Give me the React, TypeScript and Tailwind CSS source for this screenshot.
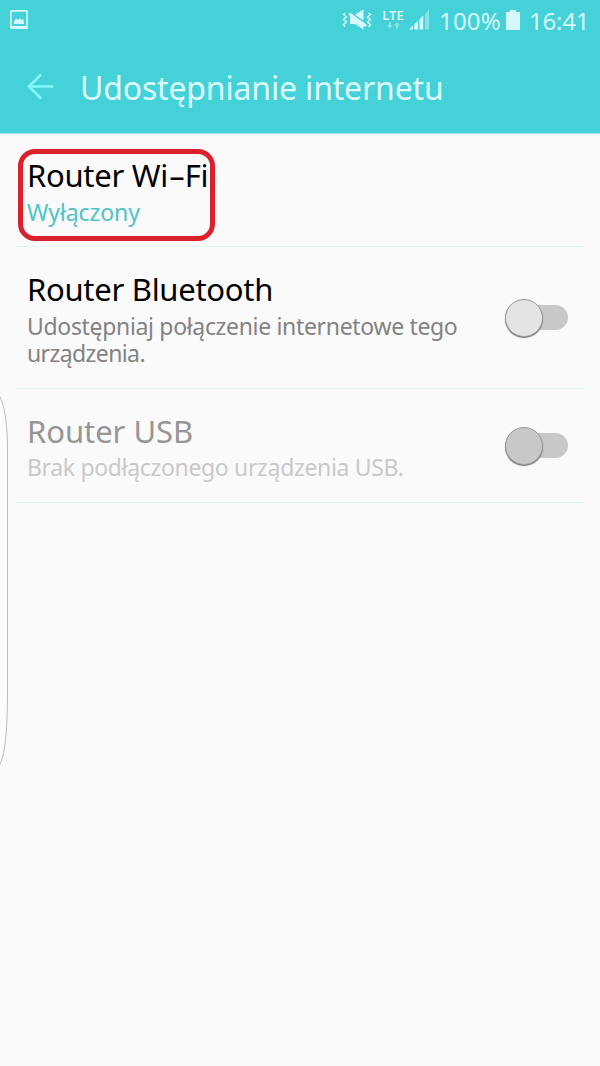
import React from "react";

function StatusBar() {
  return (
    <div className="flex h-10 items-center justify-between pr-[11px] pl-[10px] text-[#d5f8fa]">
      <svg width="18" height="20" viewBox="0 0 18 20" fill="currentColor">
        <path fillRule="evenodd" d="M1.500 0h15A1.500 1.500 0 0 1 18 1.500v16a1.500 1.500 0 0 1-1.500 1.500h-15A1.500 1.500 0 0 1 0 17.500v-16A1.500 1.500 0 0 1 1.500 0zM1.700 1.700v14.300h14.600V1.700z" />
        <path d="M4 14v-3l2.500-2.500 1.500 1.500 2-2 1.500 2 1-1 1.500 2v3z" />
      </svg>
      <div className="flex h-10 items-center">
        <svg width="30" height="24" viewBox="0 0 30 24" fill="currentColor">
          <path d="M21.500 1.500v11L13 6.500z" />
          <path d="M8 4.500L25 17l-1.500 2-2-1v3.500L13 16H8V8L6.500 7z" />
          <path d="M3 5L1.500 6.500 4.500 9l-3 2.500 3 2.500-3 2.500L3 19" fill="none" stroke="currentColor" strokeWidth="1.400" />
          <path d="M26.500 5l2 1.500-3 2.500 3 2.500-3 2.500 3 2.500-2 2.500" fill="none" stroke="currentColor" strokeWidth="1.400" />
        </svg>
        <div className="-mt-[4px] ml-[10px] flex w-[22px] flex-col items-center">
          <span className="text-[13px] leading-[14px] font-semibold">LTE</span>
          <svg width="13" height="7" viewBox="0 0 13 7" fill="currentColor" opacity="0.500">
            <path d="M2 0h2v3h2L3 6.500 0 3h2zM9 6.500h2v-3h2L10 0 7 3.500h2z" />
          </svg>
        </div>
        <svg className="-mt-[2px] ml-[5px]" width="21" height="22" viewBox="0 0 21 22" fill="currentColor">
          <path d="M0 21.500l4-4v4zM5.300 16.500l3.700-3.500v8.500H5.300zM10.500 11.500l3.700-4v14h-3.700z" />
          <path d="M16 6l4-4.500v20h-4z" opacity="0.450" />
        </svg>
        <span className="mt-px ml-[9px] w-[65px] text-[24px] leading-none tracking-[0.200px]">100%</span>
        <svg className="ml-[2px]" width="14" height="20" viewBox="0 0 14 20" fill="currentColor">
          <path d="M4 0h6v2h4v18H0V2h4z" />
        </svg>
        <span className="mt-px ml-[9px] w-[60px] text-[24px] leading-none tracking-[-0.200px]">16:41</span>
      </div>
    </div>
  );
}

function Toggle({ disabled = false }: { disabled?: boolean }) {
  return (
    <div className="flex h-10 w-[64px] shrink-0 items-center">
      <div className={`z-10 h-[38px] w-[38px] shrink-0 rounded-full border border-[#999] shadow-[0_1px_1px_#777] ${disabled ? "bg-[#c8c8c8]" : "bg-[#e4e4e4]"}`} />
      <div className="-mt-px -ml-[12px] h-[25px] w-[37px] rounded-r-full bg-[#c8c8c8]" />
    </div>
  );
}

export default function App() {
  return (
    <div className="relative flex h-[1066px] w-[600px] flex-col overflow-hidden bg-[#fafafa] font-['Noto_Sans',sans-serif]">
      <header className="h-[134px] border-b border-[#a5e3e7] bg-[#45d1d8]">
        <StatusBar />
        <div className="flex h-[93px] items-center pl-[27px]">
          <svg width="27" height="27" viewBox="0 0 27 27" fill="none" stroke="#80f9fc" strokeWidth="2.600">
            <path d="M26.500 13.500H2M14 1.500l-12 12 12 12" />
          </svg>
          <h1 className="mt-[2px] ml-[26px] text-[32px] leading-[44px] tracking-[-0.170px] whitespace-nowrap text-[#dcfdff]">Udostępnianie internetu</h1>
        </div>
      </header>
      <main className="flex flex-col px-4">
        <section className="relative h-[113px] border-b border-[#dff5f3] pt-[22px] pl-[11px]">
          <div className="absolute top-[15px] left-[2px] h-[92px] w-[197px] rounded-[17px] border-[5px] border-[#da222c]" />
          <h2 className="text-[31px] leading-[38px] tracking-[-0.280px] whitespace-nowrap text-black">Router Wi<span className="mx-[3.500px] inline-block scale-x-[1.7]">-</span>Fi</h2>
          <p className="mt-1 text-[23px] leading-[28px] tracking-[-0.100px] text-[#4fc4c8]">Wyłączony</p>
        </section>
        <section className="flex h-[142px] justify-between border-b border-[#dff5f3] pt-[23px] pr-[15px] pl-[11px]">
          <div>
            <h2 className="text-[31px] leading-[38px] tracking-[-0.280px] text-black">Router Bluetooth</h2>
            <div className="mt-[4px] flex flex-col text-[23px] leading-[28px] tracking-[-0.330px] whitespace-nowrap text-[#838383]"><span>Udostępniaj połączenie internetowe tego</span><span className="-mt-px tracking-[-0.600px]">urządzenia.</span></div>
          </div>
          <div className="pt-[28px]"><Toggle /></div>
        </section>
        <section className="flex h-[114px] justify-between border-b border-[#dff5f3] pt-[23px] pr-[15px] pl-[11px]">
          <div>
            <h2 className="text-[31px] leading-[38px] tracking-[-0.050px] text-[#969696]">Router USB</h2>
            <p className="mt-[3px] text-[23px] leading-[28px] tracking-[-0.340px] whitespace-nowrap text-[#c9c9c9]">Brak podłączonego urządzenia USB.</p>
          </div>
          <div className="pt-[14px]"><Toggle disabled /></div>
        </section>
      </main>
      <svg className="absolute top-[390px] left-0" width="12" height="380" viewBox="0 0 12 380">
        <path d="M-1 5C5 16 7.500 34 7.500 62V300C7.500 342 5 366 -1 376" fill="#fdfdfd" stroke="#bcbcbc" strokeWidth="1" />
      </svg>
    </div>
  );
}
